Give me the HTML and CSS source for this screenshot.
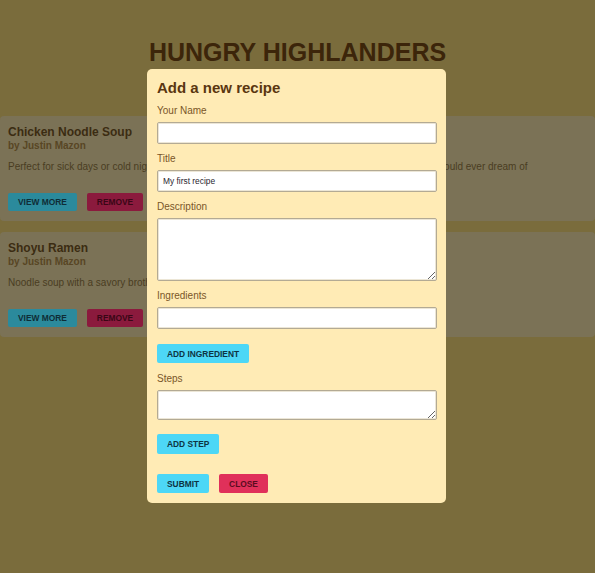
FILE: index.html
```
<!DOCTYPE html>
<html lang="en">
	<head>
		<meta charset="UTF-8">
		<title>Hungry Highlanders</title>
		<link rel="stylesheet" href="styles.css">
	</head>
	<body>
		<h1 class="site-title">HUNGRY HIGHLANDERS</h1>

		<ul class="recipe-list">
			<li class="recipe-card">
				<h2 class="recipe-name">Chicken Noodle Soup</h2>
				<h3 class="recipe-author">by Justin Mazon</h3>
				<p class="recipe-desc">Perfect for sick days or cold nights. The warmest, most comforting, hearty bowl of soup someone could ever dream of</p>
				<div class="recipe-actions">
					<button class="btn btn-view">VIEW MORE</button>
					<button class="btn btn-remove">REMOVE</button>
				</div>
			</li>
			<li class="recipe-card">
				<h2 class="recipe-name">Shoyu Ramen</h2>
				<h3 class="recipe-author">by Justin Mazon</h3>
				<p class="recipe-desc">Noodle soup with a savory broth and pork.</p>
				<div class="recipe-actions">
					<button class="btn btn-view">VIEW MORE</button>
					<button class="btn btn-remove">REMOVE</button>
				</div>
			</li>
		</ul>

		<form class="modal">
			<h2 class="modal-title">Add a new recipe</h2>

			<label class="field-label" for="name">Your Name</label>
			<input class="field" id="name" type="text">

			<label class="field-label" for="title">Title</label>
			<input class="field" id="title" type="text" value="My first recipe">

			<label class="field-label" for="desc">Description</label>
			<textarea class="field field-desc" id="desc"></textarea>

			<label class="field-label" for="ingredient">Ingredients</label>
			<input class="field" id="ingredient" type="text">
			<button type="button" class="btn btn-add">ADD INGREDIENT</button>

			<label class="field-label" for="step">Steps</label>
			<textarea class="field field-step" id="step"></textarea>
			<button type="button" class="btn btn-add">ADD STEP</button>

			<div class="modal-actions">
				<button type="button" class="btn btn-add">SUBMIT</button>
				<button type="button" class="btn btn-close">CLOSE</button>
			</div>
		</form>
	</body>
</html>
```

FILE: styles.css
```
*{
	margin: 0;
	padding: 0;
	box-sizing: border-box;
}
body{
	background: #7a6c3c;
	font-family: "Liberation Sans", Arial, sans-serif;
	height: 573px;
	overflow: hidden;
}
ul{
	list-style: none;
}

/* page behind the modal (dimmed) */
.site-title{
	font-size: 25px;
	line-height: 30px;
	text-align: center;
	color: #3c250a;
	padding: 37px 0 49px;
}
.recipe-list{
	display: flex;
	flex-direction: column;
	gap: 11px;
}
.recipe-card{
	background: #7b7256;
	border-radius: 4px;
	height: 105px;
	padding: 10px 8px 10px;
}
.recipe-name{
	font-size: 12px;
	line-height: 13px;
	color: #3b2c12;
}
.recipe-author{
	font-size: 10px;
	line-height: 13px;
	color: #584624;
}
.recipe-desc{
	font-size: 10px;
	line-height: 14px;
	color: #4a3d22;
	margin-top: 8px;
	white-space: nowrap;
}
.recipe-actions{
	display: flex;
	gap: 10px;
	margin-top: 19px;
}

.btn{
	border: none;
	border-radius: 2px;
	font-family: "Liberation Sans", Arial, sans-serif;
	font-size: 8.4px;
	font-weight: bold;
	white-space: nowrap;
	padding: 0 10px;
	height: 18px;
}
.btn-view{
	background: #2b8a9c;
	color: #0f2d36;
}
.btn-remove{
	background: #8b1a3d;
	color: #3a0716;
}

/* modal */
.modal{
	position: absolute;
	top: 69px;
	left: 147px;
	width: 299px;
	background: #ffebb5;
	border-radius: 5px;
	padding: 10px;
	display: flex;
	flex-direction: column;
	align-items: flex-start;
}
.modal-title{
	font-size: 15px;
	line-height: 17px;
	color: #5a3610;
}
.field-label{
	font-size: 10px;
	line-height: 12px;
	color: #7a5628;
	margin: 9px 0 5px;
}
.field{
	width: 280px;
	height: 22px;
	background: #fff;
	border: 1px solid #b3aa94;
	border-radius: 2px;
	box-shadow: inset 0 0 0 1px #ece6d6;
	font-family: "Liberation Sans", Arial, sans-serif;
	font-size: 8.4px;
	color: #2a2630;
	padding: 0 5px;
}
.field-desc{
	height: 63px;
}
.field-step{
	height: 30px;
}
.btn-add{
	background: #4dd7f6;
	color: #0d3442;
	height: 19px;
	margin-top: 15px;
	margin-bottom: 1px;
}
.field-step + .btn-add{
	margin-top: 14px;
	height: 20px;
}
.modal-actions{
	display: flex;
	gap: 10px;
	margin-top: 19px;
}
.modal-actions .btn{
	margin: 0;
	height: 19px;
}
.btn-close{
	background: #e0305a;
	color: #5a0c1f;
}
```
